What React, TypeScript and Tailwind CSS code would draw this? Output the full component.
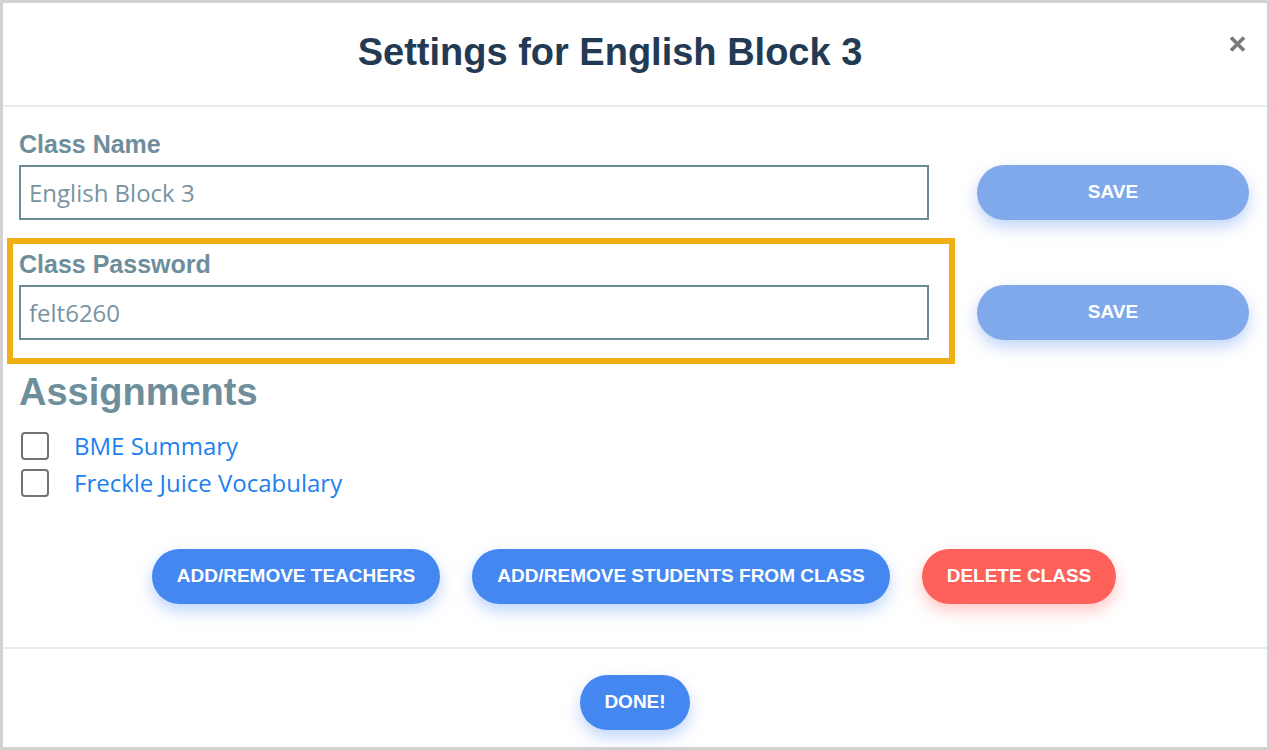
import React from "react";

const sans = { fontFamily: '"Liberation Sans", Arial, Helvetica, sans-serif' };

function Label({ children }: { children: React.ReactNode }) {
  return (
    <div className="text-[25px] leading-[30px] font-bold text-[#6e8e9c] mb-[6px]" style={sans}>
      {children}
    </div>
  );
}

function TextBox({ value }: { value: string }) {
  return (
    <div className="w-[910px] h-[55px] border-2 border-[#6b8b97] flex items-center pl-[8px] text-[24px] text-[#7893a1] font-['Open_Sans',sans-serif]">
      {value}
    </div>
  );
}

function SaveButton({ className = "" }: { className?: string }) {
  return (
    <button
      className={`w-[272px] h-[55px] rounded-full bg-[#80a9eb] text-white text-[19px] font-bold shadow-[0_7px_16px_rgba(80,130,235,0.35)] ${className}`}
      style={sans}
    >
      SAVE
    </button>
  );
}

function Checkbox() {
  return <div className="w-[28px] h-[28px] rounded-[4px] border-2 border-[#737373] bg-white shrink-0" />;
}

export default function App() {
  return (
    <div className="w-[1270px] h-[750px] border-[3px] border-[#d2d2d2] bg-white flex flex-col">
      <div className="relative h-[104px] shrink-0 flex items-center justify-center pr-[50px] border-b-2 border-[#e8ecef]">
        <h1 className="text-[38px] leading-[44px] font-bold text-[#233a54] -mt-[4px]" style={sans}>
          Settings for English Block 3
        </h1>
        <svg
          className="absolute right-[20px] top-[32px]"
          width="19"
          height="18"
          viewBox="0 0 19 18"
        >
          <path d="M3 2.5 L16 15.5 M16 2.5 L3 15.5" stroke="#7a7a7a" strokeWidth="3.6" strokeLinecap="butt" />
        </svg>
      </div>

      <div className="h-[542px] shrink-0 pl-[16px] pr-[18px] pt-[22px] flex flex-col border-b-2 border-[#e8ecef]">
        <div className="flex items-end">
          <div className="flex flex-col">
            <Label>Class Name</Label>
            <TextBox value="English Block 3" />
          </div>
          <SaveButton className="ml-[48px]" />
        </div>

        <div className="flex items-end">
          <div className="-ml-[12px] mt-[18px] border-[6px] border-[#f0b013] pl-[6px] pr-[20px] pt-[5px] pb-[18px] flex flex-col">
            <Label>Class Password</Label>
            <TextBox value="felt6260" />
          </div>
          <SaveButton className="ml-[22px] mb-[24px]" />
        </div>

        <h2 className="mt-[6px] text-[38px] leading-[44px] font-bold text-[#6e8e9c]" style={sans}>
          Assignments
        </h2>

        <div className="mt-[18px] flex flex-col gap-[9px] pl-[2px]">
          {["BME Summary", "Freckle Juice Vocabulary"].map((t) => (
            <div key={t} className="h-[28px] flex items-center gap-[25px]">
              <Checkbox />
              <span className="text-[24px] text-[#1d7ff0] font-['Open_Sans',sans-serif] leading-[28px]">{t}</span>
            </div>
          ))}
        </div>

        <div className="mt-[52px] flex justify-center gap-[32px]" style={sans}>
          <button className="h-[55px] px-[25px] rounded-full bg-[#4487f1] text-white text-[19px] font-bold shadow-[0_7px_16px_rgba(68,135,241,0.35)]">
            ADD/REMOVE TEACHERS
          </button>
          <button className="h-[55px] px-[25px] rounded-full bg-[#4487f1] text-white text-[19px] font-bold shadow-[0_7px_16px_rgba(68,135,241,0.35)]">
            ADD/REMOVE STUDENTS FROM CLASS
          </button>
          <button className="h-[55px] px-[25px] rounded-full bg-[#fe605a] text-white text-[19px] font-bold shadow-[0_7px_16px_rgba(254,96,90,0.35)]">
            DELETE CLASS
          </button>
        </div>
      </div>

      <div className="flex-1 flex justify-center pt-[26px]">
        <button
          className="w-[110px] h-[55px] rounded-full bg-[#4487f1] text-white text-[19px] font-bold shadow-[0_7px_16px_rgba(68,135,241,0.35)]"
          style={sans}
        >
          DONE!
        </button>
      </div>
    </div>
  );
}
